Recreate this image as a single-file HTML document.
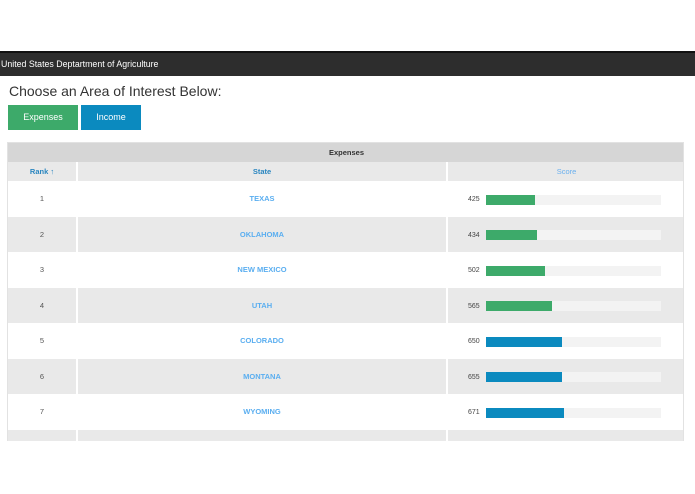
<!DOCTYPE html>
<html><head><style>
body{margin:0;width:695px;height:494px;background:#fff;font-family:"Liberation Sans",Arial,sans-serif;position:relative;overflow:hidden}
.bar{position:absolute;left:0;top:51px;width:695px;height:25px;background:#2d2d2d;border-top:2px solid #111;box-sizing:border-box;color:#fff;font-size:8.8px;line-height:23px;padding-left:1px}
h1{position:absolute;left:9px;top:83px;margin:0;font-weight:normal;font-size:14px;color:#333}
.btn{position:absolute;top:105px;height:25px;color:#fff;font-size:9px;line-height:25px;text-align:center}
.wrap{position:absolute;left:7px;top:142px;width:677px;height:299px;overflow:hidden;border:1px solid #e2e2e2;border-bottom:none;box-sizing:border-box;background:#fff}
.r{position:absolute;left:0;width:677px}
.c{position:absolute;top:0;height:100%;text-align:center;font-size:7.5px;box-sizing:border-box}
.g{background:#e9e9e9}
.num{position:absolute;left:460px;font-size:7px;color:#444}
.trk{position:absolute;left:478px;width:175px;height:10px;background:#f3f3f3}
.fill{height:10px}
</style></head><body>
<div class="bar">United States Deptartment of Agriculture</div>
<h1>Choose an Area of Interest Below:</h1>
<div class="btn" style="left:8px;width:70px;background:#3daa6a">Expenses</div>
<div class="btn" style="left:81px;width:60px;background:#0b8abf">Income</div>
<div class="wrap">
<div class="r" style="top:0;height:19px;background:#d6d6d6;font-size:7.5px;font-weight:bold;text-align:center;line-height:19px;color:#333">Expenses</div>
<div class="r" style="top:19px;height:19px;background:#e9e9e9;line-height:19px;font-weight:bold;color:#2a86c0">
<div class="c" style="left:0;width:68px">Rank &#8593;</div>
<div class="c" style="left:68px;width:372px;border-left:2px solid #fff;border-right:2px solid #fff">State</div>
<div class="c" style="left:440px;width:237px;color:#6ab0ef;font-weight:normal">Score</div>
</div>
<div id="rows"></div>
</div>
<script>
var d=[["1","TEXAS","425",49,"#3daa6a"],["2","OKLAHOMA","434",51,"#3daa6a"],["3","NEW MEXICO","502",59,"#3daa6a"],["4","UTAH","565",66,"#3daa6a"],["5","COLORADO","650",76,"#0b8abf"],["6","MONTANA","655",76,"#0b8abf"],["7","WYOMING","671",78,"#0b8abf"],["","","",0,"#fff"]];
var h="";d.forEach(function(x,i){var t=38+i*35.5;h+='<div class="r'+(i%2?' g':'')+'" style="top:'+t+'px;height:35.5px;line-height:35.5px"><div class="c" style="left:0;width:68px;color:#555">'+x[0]+'</div><div class="c" style="left:68px;width:372px;border-left:2px solid #fff;border-right:2px solid #fff;color:#5aaef0;font-weight:bold">'+x[1]+'</div>'+(x[2]?'<div class="num" style="top:0;line-height:38px">'+x[2]+'</div><div class="trk" style="top:13.5px"><div class="fill" style="width:'+x[3]+'px;background:'+x[4]+'"></div></div>':'')+'</div>';});
document.getElementById("rows").innerHTML=h;
</script>
</body></html>
